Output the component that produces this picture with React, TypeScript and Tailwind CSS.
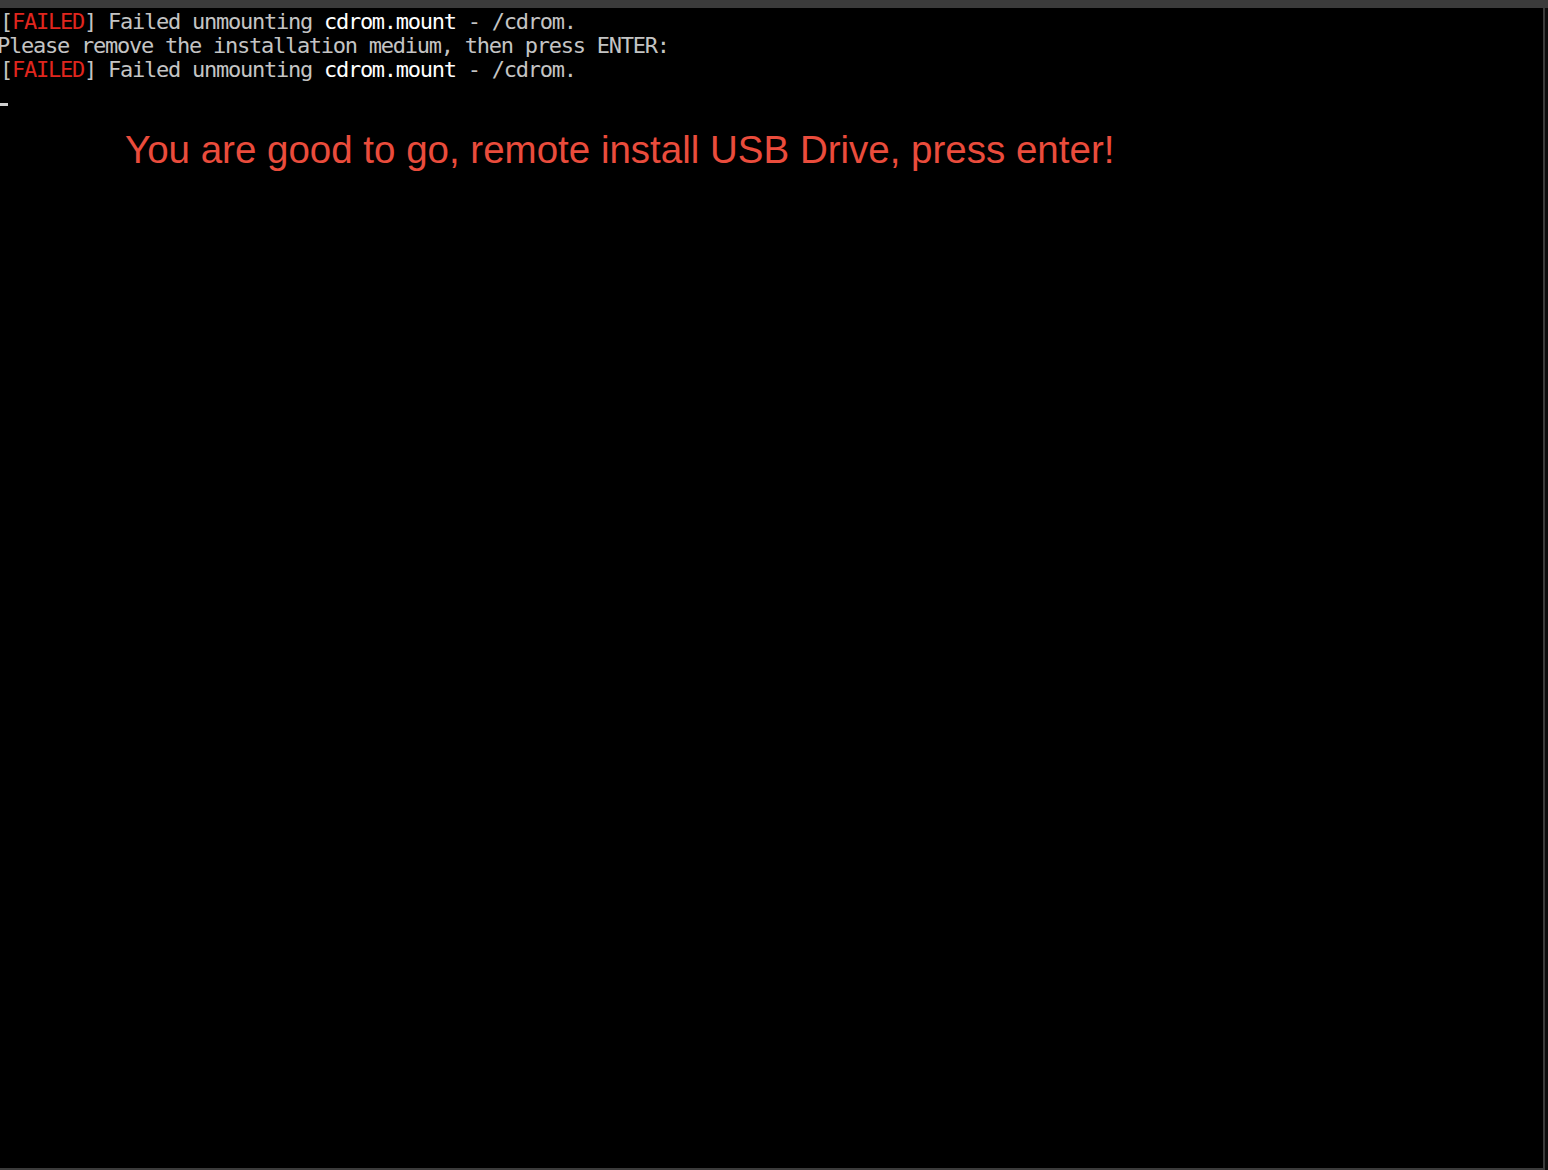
export default function App() {
  const mono = { fontFamily: '"DejaVu Sans Mono", "Liberation Mono", monospace' };
  return (
    <div className="w-[1548px] h-[1170px] bg-black flex flex-col overflow-hidden">
      <div className="h-[8px] bg-[#3b3b3b] shrink-0" />
      <div className="flex flex-1 min-h-0">
        <div className="flex-1 flex flex-col min-w-0">
          <div
            className="pt-[2px] text-[22px] leading-[24px] tracking-[-1.25px] text-[#c4c4c4] whitespace-pre"
            style={mono}
          >
            <div>
              [<span className="text-[#e0261e]">FAILED</span>] Failed unmounting <span className="text-white">cdrom.mount</span> - /cdrom.
            </div>
            <div className="-ml-[3px]">Please remove the installation medium, then press ENTER:</div>
            <div>
              [<span className="text-[#e0261e]">FAILED</span>] Failed unmounting <span className="text-white">cdrom.mount</span> - /cdrom.
            </div>
            <div className="h-[24px] flex items-end">
              <div className="w-[8px] h-[3px] bg-[#d0d0d0]" />
            </div>
          </div>
          <div
            className="pl-[125px] mt-[22px] text-[38.5px] leading-[44px] text-[#ea4c3c] whitespace-pre"
            style={{ fontFamily: '"Liberation Sans", Arial, sans-serif' }}
          >
            You are good to go, remote install USB Drive, press enter!
          </div>
          <div className="flex-1" />
          <div className="h-[2px] bg-[#3b3b3b]" />
        </div>
        <div className="w-[2px] bg-[#3b3b3b]" />
        <div className="w-[3px] bg-[#0d0d0d]" />
      </div>
    </div>
  );
}
